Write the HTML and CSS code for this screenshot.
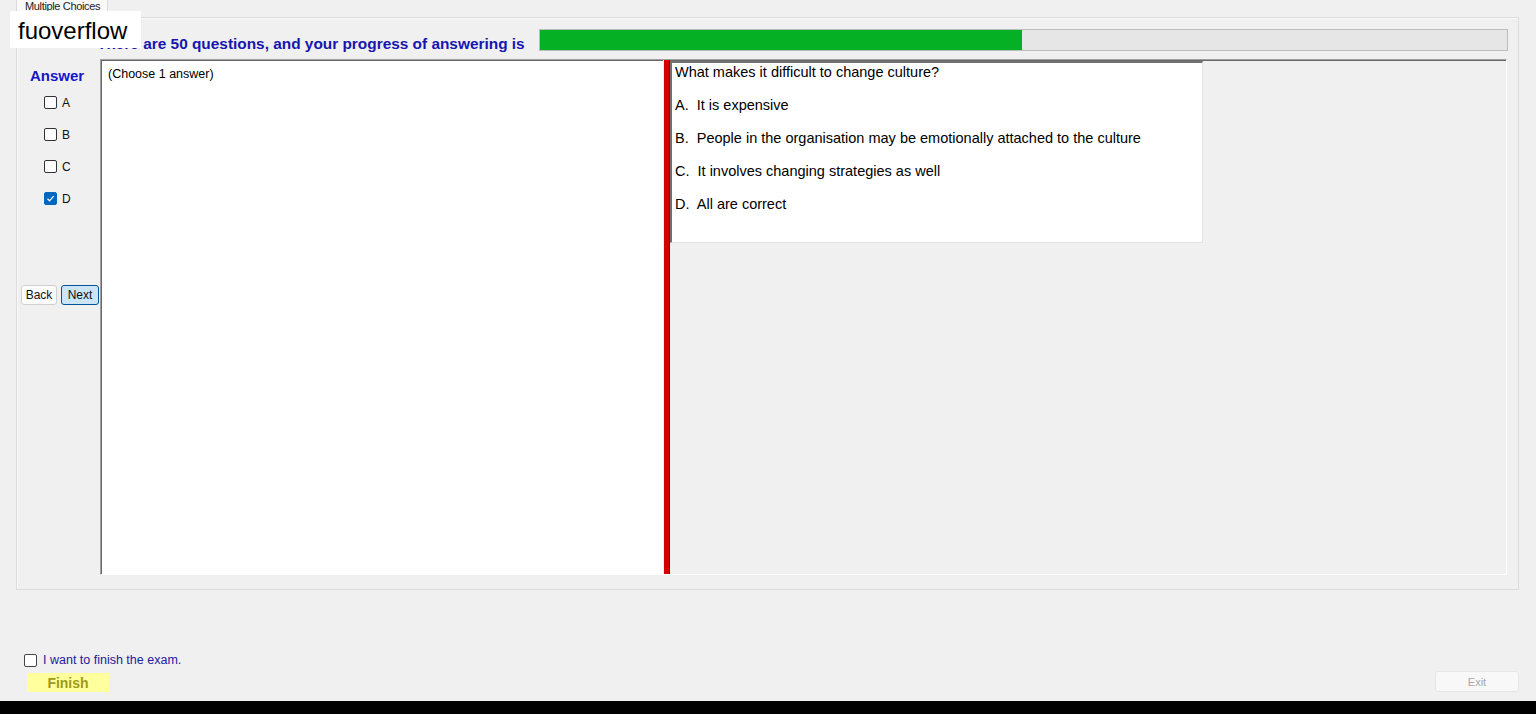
FILE: index.html
```html
<html>
  <head>
    <link rel="stylesheet" href="styles.css">
    <title>Multiple Choices</title>
  </head>
  <body>
    <div class="app">
      <div class="tabstrip">
        <div class="tab">Multiple Choices</div>
      </div>

      <section class="tabpage">
        <div class="header">
          <span class="header-text">There are 50 questions, and your progress of answering is</span>
          <div class="progress">
            <div class="progress-fill" style="width: 49.8%"></div>
          </div>
        </div>

        <div class="main">
          <aside class="answers">
            <div class="answers-title">Answer</div>
            <div class="choices">
              <label class="choice"><span class="box"></span>A</label>
              <label class="choice"><span class="box"></span>B</label>
              <label class="choice"><span class="box"></span>C</label>
              <label class="choice"><span class="box checked">
                <svg width="9" height="9" viewBox="0 0 9 9"><path d="M1.5 4.8 L3.6 6.8 L7.6 2.2" fill="none" stroke="#fff" stroke-width="1.2"/></svg>
              </span>D</label>
            </div>
            <div class="nav">
              <button class="btn">Back</button>
              <button class="btn btn-focus">Next</button>
            </div>
          </aside>

          <div class="split">
            <div class="pane-left">(Choose 1 answer)</div>
            <div class="splitter"></div>
            <div class="pane-right">
              <div class="question">
                <div class="q-line">What makes it difficult to change culture?</div>
                <div class="q-line">A.  It is expensive</div>
                <div class="q-line">B.  People in the organisation may be emotionally attached to the culture</div>
                <div class="q-line">C.  It involves changing strategies as well</div>
                <div class="q-line">D.  All are correct</div>
              </div>
            </div>
          </div>
        </div>
      </section>

      <section class="footer">
        <label class="finish-check"><span class="box"></span>I want to finish the exam.</label>
        <div class="footer-row">
          <button class="btn-finish">Finish</button>
          <button class="btn-exit" disabled>Exit</button>
        </div>
      </section>

      <div class="taskbar"></div>

      <div class="brand">fuoverflow</div>
    </div>
  </body>
</html>
```

FILE: styles.css
```css
body {
  margin: 0;
  background-color: #f0f0f0;
  font-family: "Liberation Sans", Arial, sans-serif;
  font-size: 12px;
  color: #000;
  overflow: hidden;
}
.app {
  position: relative;
  display: flex;
  flex-direction: column;
  height: 714px;
}
.brand {
  position: absolute;
  top: 11px;
  left: 10px;
  width: 123px;
  height: 37px;
  padding-left: 8px;
  background-color: #fff;
  font-size: 24px;
  line-height: 40px;
  color: #000;
}

/* tabs */
.tabstrip {
  height: 17px;
  padding-left: 16px;
  display: flex;
}
.tab {
  width: 82px;
  padding: 0 0 0 8px;
  border-left: 1px solid #dadada;
  border-right: 1px solid #dadada;
  background-color: #f9f9f9;
  font-size: 11px;
  letter-spacing: -0.35px;
  line-height: 12px;
  color: #222;
  overflow: hidden;
  white-space: nowrap;
}
.tabpage {
  height: 571px;
  margin: 0 17px 0 16px;
  border: 1px solid #dcdcdc;
  box-shadow: inset 1px 1px 0 #fafafa;
  display: flex;
  flex-direction: column;
}

/* header with progress */
.header {
  display: flex;
  align-items: flex-end;
  height: 22px;
  margin-top: 11px;
  padding-left: 80px;
  padding-right: 10px;
}
.header-text {
  font-size: 15.4px;
  font-weight: bold;
  color: #1616b0;
  line-height: 14px;
  white-space: nowrap;
}
.progress {
  margin-left: auto;
  width: 967px;
  height: 20px;
  border: 1px solid #bcbcbc;
  background-color: #e6e6e6;
  display: flex;
}
.progress-fill {
  background-color: #06b025;
}

/* main area */
.main {
  display: flex;
  flex: 1;
  margin-top: 8px;
  margin-bottom: 14px;
}
.answers {
  width: 83px;
  display: flex;
  flex-direction: column;
}
.answers-title {
  margin-top: 8px;
  padding-right: 3px;
  text-align: center;
  font-size: 15px;
  font-weight: bold;
  line-height: 17px;
  color: #1616c8;
}
.choices {
  display: flex;
  flex-direction: column;
  gap: 19px;
  margin-top: 12px;
  padding-left: 27px;
}
.choice {
  display: flex;
  align-items: center;
  gap: 5px;
  height: 13px;
  font-size: 12px;
  color: #111;
}
.box {
  width: 11px;
  height: 11px;
  border: 1px solid #333;
  border-radius: 2px;
  background-color: #fff;
  display: flex;
  align-items: center;
  justify-content: center;
}
.box.checked {
  background-color: #0067c0;
  border-color: #0067c0;
}
.nav {
  display: flex;
  gap: 4px;
  margin-top: 80px;
  padding-left: 4px;
}
.btn {
  height: 20px;
  width: 36px;
  padding: 0;
  border: 1px solid #d0d0d0;
  border-radius: 3px;
  background-color: #fdfdfd;
  font-family: inherit;
  font-size: 12px;
  color: #111;
}
.btn-focus {
  width: 38px;
  border-color: #005499;
  background-color: #cce4f7;
}

.split {
  flex: 1;
  display: flex;
  margin-right: 11px;
  border-top: 1px solid #a0a0a0;
  border-left: 1px solid #a0a0a0;
  border-bottom: 1px solid #fff;
  border-right: 1px solid #fff;
}
.pane-left {
  width: 555px;
  background-color: #fff;
  border-top: 1px solid #696969;
  border-left: 1px solid #696969;
  padding: 6px 0 0 6px;
  font-size: 12.5px;
  line-height: 14px;
}
.splitter {
  width: 5px;
  margin-left: 1px;
  background-color: #d70000;
  border-right: 1px solid #a00000;
}
.pane-right {
  flex: 1;
  border-top: 1px solid #696969;
}
.question {
  width: 527px;
  height: 167px;
  padding: 0 0 12px 3px;
  background-color: #fff;
  border-top: 2px solid #707070;
  border-left: 2px solid #707070;
  border-right: 1px solid #e3e3e3;
  border-bottom: 1px solid #e3e3e3;
  display: flex;
  flex-direction: column;
  gap: 15px;
  font-size: 14.5px;
}
.q-line {
  line-height: 18px;
  white-space: pre;
}

/* footer */
.footer {
  flex: 1;
  display: flex;
  flex-direction: column;
  justify-content: flex-end;
  padding: 0 17px 9px 24px;
}
.finish-check {
  display: flex;
  align-items: center;
  gap: 6px;
  height: 14px;
  margin-top: 2px;
  font-size: 12.5px;
  color: #20209c;
}
.finish-check .box {
  border-color: #444;
}
.footer-row {
  display: flex;
  justify-content: space-between;
  align-items: flex-end;
  margin-top: 4px;
}
.btn-finish {
  margin-left: 3px;
  width: 82px;
  height: 19px;
  padding: 0;
  border: none;
  background-color: #ffff9e;
  font-family: inherit;
  font-size: 14px;
  font-weight: bold;
  color: #9c9c14;
}
.btn-exit {
  width: 84px;
  height: 21px;
  padding: 0;
  border: 1px solid #e6e6e6;
  border-radius: 3px;
  background-color: #f8f8f8;
  font-family: inherit;
  font-size: 11px;
  color: #a8a8a8;
}
.taskbar {
  height: 13px;
  background-color: #000;
}
```
